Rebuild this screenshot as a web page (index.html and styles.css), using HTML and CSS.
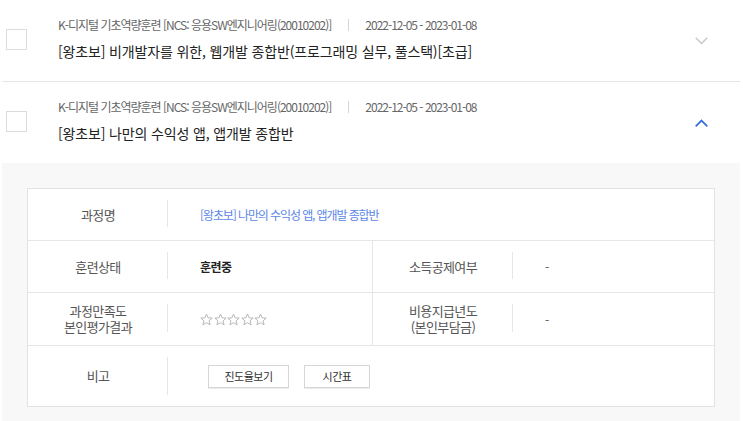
FILE: index.html
```html
<!DOCTYPE html>
<html lang="ko">
<head>
<meta charset="utf-8">
<link rel="stylesheet" href="styles.css">
</head>
<body>
<div class="list">
  <div class="item">
    <div class="item-head">
      <span class="check"></span>
      <div class="info">
        <div class="meta"><span class="cat">K-디지털 기초역량훈련 [NCS: 응용SW엔지니어링(20010202)]</span><span class="bar"></span><span class="date">2022-12-05 - 2023-01-08</span></div>
        <div class="title">[왕초보] 비개발자를 위한, 웹개발 종합반(프로그래밍 실무, 풀스택)[초급]</div>
      </div>
      <svg class="chev" width="13" height="8" viewBox="0 0 13 8"><path d="M0.7 0.7 L6.5 6.5 L12.3 0.7" fill="none" stroke="#c9c9c9" stroke-width="1.5"/></svg>
    </div>
  </div>
  <div class="item open">
    <div class="item-head">
      <span class="check"></span>
      <div class="info">
        <div class="meta"><span class="cat">K-디지털 기초역량훈련 [NCS: 응용SW엔지니어링(20010202)]</span><span class="bar"></span><span class="date">2022-12-05 - 2023-01-08</span></div>
        <div class="title">[왕초보] 나만의 수익성 앱, 앱개발 종합반</div>
      </div>
      <svg class="chev" width="13" height="8" viewBox="0 0 13 8"><path d="M0.7 7.3 L6.5 1.5 L12.3 7.3" fill="none" stroke="#3a6fe0" stroke-width="1.8"/></svg>
    </div>
    <div class="panel">
      <div class="detail">
        <div class="lbl r1">과정명</div>
        <div class="val r1 span3 link">[왕초보] 나만의 수익성 앱, 앱개발 종합반</div>

        <div class="lbl r2">훈련상태</div>
        <div class="val r2 strong">훈련중</div>
        <div class="lbl r2 sep">소득공제여부</div>
        <div class="val r2">-</div>

        <div class="lbl r3">과정만족도<br>본인평가결과</div>
        <div class="val r3">
          <span class="stars">
            <svg width="13" height="13" viewBox="0 0 13 13"><path d="M6.5 1 L8.1 4.8 L12.2 5.1 L9.1 7.8 L10.1 11.8 L6.5 9.7 L2.9 11.8 L3.9 7.8 L0.8 5.1 L4.9 4.8 Z" fill="#fff" stroke="#b8b8b8" stroke-width="1"/></svg>
            <svg width="13" height="13" viewBox="0 0 13 13"><path d="M6.5 1 L8.1 4.8 L12.2 5.1 L9.1 7.8 L10.1 11.8 L6.5 9.7 L2.9 11.8 L3.9 7.8 L0.8 5.1 L4.9 4.8 Z" fill="#fff" stroke="#b8b8b8" stroke-width="1"/></svg>
            <svg width="13" height="13" viewBox="0 0 13 13"><path d="M6.5 1 L8.1 4.8 L12.2 5.1 L9.1 7.8 L10.1 11.8 L6.5 9.7 L2.9 11.8 L3.9 7.8 L0.8 5.1 L4.9 4.8 Z" fill="#fff" stroke="#b8b8b8" stroke-width="1"/></svg>
            <svg width="13" height="13" viewBox="0 0 13 13"><path d="M6.5 1 L8.1 4.8 L12.2 5.1 L9.1 7.8 L10.1 11.8 L6.5 9.7 L2.9 11.8 L3.9 7.8 L0.8 5.1 L4.9 4.8 Z" fill="#fff" stroke="#b8b8b8" stroke-width="1"/></svg>
            <svg width="13" height="13" viewBox="0 0 13 13"><path d="M6.5 1 L8.1 4.8 L12.2 5.1 L9.1 7.8 L10.1 11.8 L6.5 9.7 L2.9 11.8 L3.9 7.8 L0.8 5.1 L4.9 4.8 Z" fill="#fff" stroke="#b8b8b8" stroke-width="1"/></svg>
          </span>
        </div>
        <div class="lbl r3 sep">비용지급년도<br>(본인부담금)</div>
        <div class="val r3">-</div>

        <div class="lbl r4 last">비고</div>
        <div class="val r4 span3 last">
          <div class="btns"><button class="btn b1">진도율보기</button><button class="btn b2">시간표</button></div>
        </div>
      </div>
    </div>
  </div>
</div>
</body>
</html>
```

FILE: styles.css
```css
* { box-sizing: border-box; }
html, body { margin: 0; padding: 0; background: #fff; }
body {
  font-family: "Noto Sans CJK KR", "Noto Sans", sans-serif;
  color: #333;
}
.list { padding: 0 3px 0 2px; }
.item-head {
  height: 82px;
  display: flex;
  align-items: center;
  padding: 0 32px 0 4px;
  border-bottom: 1px solid #e6e6e6;
}
.item.open .item-head { border-bottom: 0; height: 81px; }
.check {
  width: 21px; height: 21px;
  border: 1px solid #dcdcdc;
  background: #fff;
  flex: none;
  margin-top: -2px;
}
.info { flex: 1; margin-left: 31px; margin-top: -3px; }
.meta {
  display: flex;
  align-items: center;
  font-size: 12px;
  line-height: 18px;
  color: #666;
  letter-spacing: -1px;
}
.bar {
  width: 1px; height: 12px; background: #d6d6d6;
  margin: 0 16px 0 17px;
}
.title {
  margin-top: 6px;
  font-size: 14px;
  line-height: 22px;
  color: #222;
  letter-spacing: -0.15px;
}
.chev { flex: none; display: block; }

.panel {
  background: #f8f8f8;
  padding: 25px 25px 25px 25px;
}
.detail {
  display: grid;
  grid-template-columns: 140px 204px 141px 1fr;
  grid-template-rows: 52px 52px 53px 60px;
  background: #fff;
  border: 1px solid #e3e3e3;
}
.lbl, .val {
  border-bottom: 1px solid #e6e6e6;
  display: flex;
  align-items: center;
  font-size: 13px;
  letter-spacing: -0.6px;
}
.last { border-bottom: 0; }
.lbl {
  position: relative;
  justify-content: center;
  text-align: center;
  color: #555;
  line-height: 16px;
}
.lbl::after {
  content: "";
  position: absolute;
  right: 0; top: 11px; bottom: 13px;
  width: 1px;
  background: #e6e6e6;
}
.lbl.last::after { bottom: 11px; }
.sep { border-left: 1px solid #e6e6e6; }
.val { padding-left: 32px; color: #555; font-size: 12px; }
.span3 { grid-column: span 3; }
.link { color: #5b87e6; font-size: 12px; letter-spacing: -1.1px; }
.strong { color: #222; font-weight: 700; font-size: 12px; letter-spacing: -0.5px; }
.stars { display: flex; gap: 0.5px; }
.stars svg { display: block; }
.btns { display: flex; gap: 15px; margin-left: 8px; }
.btn {
  height: 23px;
  border: 1px solid #d6d6d6;
  background: #fff;
  font-family: "Noto Sans CJK KR", sans-serif;
  font-size: 11px;
  letter-spacing: -0.5px;
  color: #333;
  padding: 0;
  box-shadow: 0 1px 0 #ececec;
}
.b1 { width: 81px; }
.b2 { width: 66px; }
```
